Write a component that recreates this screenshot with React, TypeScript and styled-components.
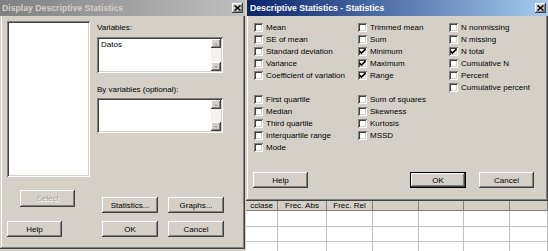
import styled, { createGlobalStyle } from "styled-components";

const GlobalStyle = createGlobalStyle`
  html, body {
    margin: 0;
    padding: 0;
  }
  body {
    width: 548px;
    height: 251px;
    overflow: hidden;
    background: #d4d0c8;
    font-family: "Liberation Sans", Arial, sans-serif;
    font-size: 8px;
    color: #000;
  }
`;

const raised = `
  box-shadow:
    inset -1px -1px #404040,
    inset 1px 1px #ffffff,
    inset -2px -2px #808080,
    inset 2px 2px #d4d0c8;
`;

const sunken = `
  box-shadow:
    inset 1px 1px #808080,
    inset -1px -1px #ffffff,
    inset 2px 2px #404040,
    inset -2px -2px #d4d0c8;
`;

const Screen = styled.div`
  display: flex;
  width: 548px;
  height: 251px;
  overflow: hidden;
`;

const Window = styled.div<{ $w: number; $h: number }>`
  width: ${(p) => p.$w}px;
  height: ${(p) => p.$h}px;
  flex: none;
  display: flex;
  flex-direction: column;
  background: #d4d0c8;
  box-shadow:
    inset -1px -1px #404040,
    inset 1px 0 #d4d0c8,
    inset -2px -2px #808080,
    inset 2px 0 #ffffff;
`;

const TitleBar = styled.div<{ $active?: boolean }>`
  height: 16px;
  flex: none;
  display: flex;
  align-items: center;
  justify-content: space-between;
  padding: 0 2px 0 ${(p) => (p.$active ? 3 : 2)}px;
  margin-left: ${(p) => (p.$active ? 1 : 0)}px;
  background: ${(p) =>
    p.$active
      ? "linear-gradient(to right, #0a246a, #a6caf0)"
      : "linear-gradient(to right, #808080, #c0c0c0)"};
  color: ${(p) => (p.$active ? "#ffffff" : "#d4d0c8")};
  font-weight: bold;
  font-size: 8.7px;
  white-space: nowrap;
`;

const CloseButton = styled.div`
  width: 11px;
  height: 10px;
  background: #d4d0c8;
  ${raised}
  display: flex;
  align-items: center;
  justify-content: center;
  svg {
    display: block;
  }
`;

const LeftBody = styled.div`
  display: grid;
  grid-template-columns: 90px 1fr;
  grid-template-rows: 156px 36px auto;
  padding-top: 5px;
`;

const ListBox = styled.div<{ $w: number; $h: number }>`
  position: relative;
  width: ${(p) => p.$w}px;
  height: ${(p) => p.$h}px;
  background: #ffffff;
  ${sunken}
  padding: 3px 3px;
  box-sizing: border-box;
`;

const SourceList = styled(ListBox)`
  margin-left: 7px;
`;

const FieldColumn = styled.div`
  padding-left: 7px;
  display: flex;
  flex-direction: column;
`;

const Label = styled.div<{ $top: number }>`
  margin-top: ${(p) => p.$top}px;
  height: 10px;
  line-height: 10px;
  white-space: nowrap;
`;

const FieldBox = styled(ListBox)<{ $gap: number }>`
  margin-top: ${(p) => p.$gap}px;
  display: flex;
  justify-content: space-between;
  padding: 2px 2px 2px 4px;
`;

const FieldText = styled.div`
  line-height: 11px;
`;

const ScrollBar = styled.div`
  width: 10px;
  display: flex;
  flex-direction: column;
  justify-content: space-between;
  background: #f4f3ef;
`;

const ArrowButton = styled.div<{ $down?: boolean }>`
  height: 9px;
  background: #d4d0c8;
  ${raised}
  display: flex;
  align-items: center;
  justify-content: center;
  &::after {
    content: "";
    border-left: 2px solid transparent;
    border-right: 2px solid transparent;
    ${(p) =>
      p.$down ? "border-top: 2px solid #a0a0a0;" : "border-bottom: 2px solid #a0a0a0;"}
  }
`;

const Button = styled.div<{ $w?: number; $h?: number; $disabled?: boolean; $default?: boolean }>`
  width: ${(p) => p.$w ?? 56}px;
  height: ${(p) => p.$h ?? 16}px;
  flex: none;
  box-sizing: border-box;
  display: flex;
  align-items: center;
  justify-content: center;
  background: #d4d0c8;
  ${(p) =>
    p.$default
      ? `box-shadow:
          inset 0 0 0 1px #000000,
          inset -2px -2px #404040,
          inset 2px 2px #ffffff,
          inset -3px -3px #808080;`
      : raised}
  color: ${(p) => (p.$disabled ? "#a0a0a0" : "#000000")};
  text-shadow: ${(p) => (p.$disabled ? "1px 1px #ffffff" : "none")};
  white-space: nowrap;
`;

const Cell = styled.div<{ $top: number; $left: number }>`
  display: flex;
  gap: 10px;
  padding-top: ${(p) => p.$top}px;
  padding-left: ${(p) => p.$left}px;
`;

const RightPane = styled.div`
  flex: 1;
  display: flex;
  flex-direction: column;
  margin-left: 1px;
`;

const StatsBody = styled.div`
  display: grid;
  grid-template-columns: 104px 91px 1fr;
  padding: 5px 0 0 8px;
`;

const CheckColumn = styled.div`
  display: flex;
  flex-direction: column;
`;

const CheckRow = styled.div`
  height: 12px;
  display: flex;
  align-items: center;
  gap: 3px;
  white-space: nowrap;
`;

const Box = styled.div`
  width: 9px;
  height: 9px;
  flex: none;
  box-sizing: border-box;
  background: #ffffff;
  ${sunken}
  display: flex;
  align-items: center;
  justify-content: center;
`;

const StatsButtons = styled.div`
  display: flex;
  margin-top: 19px;
  padding: 0 14px 0 7px;
  gap: 13px;
`;

const Spacer = styled.div`
  flex: 1;
`;

const Sheet = styled.div`
  flex: 1;
  display: grid;
  grid-template-columns: 32px 49px 46px 46px 45px 46px 1fr;
  grid-template-rows: 10px 16px 15px 15px;
  background: #ffffff;
`;

const HeadCell = styled.div`
  background: #d4d0c8;
  border-right: 1px solid #808080;
  border-bottom: 1px solid #808080;
  display: flex;
  align-items: flex-end;
  justify-content: center;
  font-size: 8px;
  line-height: 9px;
  white-space: nowrap;
`;

const DataCell = styled.div`
  border-right: 1px solid #c0c0c0;
  border-bottom: 1px solid #c0c0c0;
`;

const Check = () => (
  <svg width="7" height="7" viewBox="0 0 7 7">
    <path d="M0.5 3 L2.5 5 L6.5 1" fill="none" stroke="#000" strokeWidth="1.6" />
  </svg>
);

const XMark = () => (
  <svg width="7" height="6" viewBox="0 0 7 6">
    <path d="M0.5 0.5 L6.5 5.5 M6.5 0.5 L0.5 5.5" stroke="#000" strokeWidth="1.5" />
  </svg>
);

type Item = { label: string; on?: boolean } | null;

const columns: Item[][] = [
  [
    { label: "Mean" },
    { label: "SE of mean" },
    { label: "Standard deviation" },
    { label: "Variance" },
    { label: "Coefficient of variation" },
    null,
    { label: "First quartile" },
    { label: "Median" },
    { label: "Third quartile" },
    { label: "Interquartile range" },
    { label: "Mode" },
  ],
  [
    { label: "Trimmed mean" },
    { label: "Sum" },
    { label: "Minimum", on: true },
    { label: "Maximum", on: true },
    { label: "Range", on: true },
    null,
    { label: "Sum of squares" },
    { label: "Skewness" },
    { label: "Kurtosis" },
    { label: "MSSD" },
  ],
  [
    { label: "N nonmissing" },
    { label: "N missing" },
    { label: "N total", on: true },
    { label: "Cumulative N" },
    { label: "Percent" },
    { label: "Cumulative percent" },
  ],
];

const headers = ["cclase", "Frec. Abs", "Frec. Rel", "", "", "", ""];

function Scroll() {
  return (
    <ScrollBar>
      <ArrowButton />
      <ArrowButton $down />
    </ScrollBar>
  );
}

export default function App() {
  return (
    <>
      <GlobalStyle />
      <Screen>
        <Window $w={245} $h={249}>
          <TitleBar>
            <span>Display Descriptive Statistics</span>
            <CloseButton>
              <XMark />
            </CloseButton>
          </TitleBar>
          <LeftBody>
            <SourceList $w={83} $h={156} />
            <FieldColumn>
              <Label $top={2}>Variables:</Label>
              <FieldBox $w={126} $h={36} $gap={4}>
                <FieldText>Datos</FieldText>
                <Scroll />
              </FieldBox>
              <Label $top={12}>By variables (optional):</Label>
              <FieldBox $w={126} $h={35} $gap={3}>
                <FieldText />
                <Scroll />
              </FieldBox>
            </FieldColumn>
            <Cell $top={13} $left={20}>
              <Button $w={55} $h={17} $disabled>
                Select
              </Button>
            </Cell>
            <Cell $top={20} $left={12}>
              <Button>Statistics...</Button>
              <Button>Graphs...</Button>
            </Cell>
            <Cell $top={8} $left={7}>
              <Button $w={55}>Help</Button>
            </Cell>
            <Cell $top={8} $left={12}>
              <Button>OK</Button>
              <Button>Cancel</Button>
            </Cell>
          </LeftBody>
        </Window>

        <RightPane>
          <Window $w={302} $h={201}>
            <TitleBar $active>
              <span>Descriptive Statistics - Statistics</span>
              <CloseButton>
                <XMark />
              </CloseButton>
            </TitleBar>
            <StatsBody>
              {columns.map((col, i) => (
                <CheckColumn key={i}>
                  {col.map((item, j) =>
                    item ? (
                      <CheckRow key={j}>
                        <Box>{item.on && <Check />}</Box>
                        <span>{item.label}</span>
                      </CheckRow>
                    ) : (
                      <CheckRow key={j} />
                    )
                  )}
                </CheckColumn>
              ))}
            </StatsBody>
            <StatsButtons>
              <Button $w={55}>Help</Button>
              <Spacer />
              <Button $default>OK</Button>
              <Button $w={55}>Cancel</Button>
            </StatsButtons>
          </Window>
          <Sheet>
            {headers.map((h, i) => (
              <HeadCell key={i}>{h}</HeadCell>
            ))}
            {Array.from({ length: 21 }, (_, i) => (
              <DataCell key={i} />
            ))}
          </Sheet>
        </RightPane>
      </Screen>
    </>
  );
}
